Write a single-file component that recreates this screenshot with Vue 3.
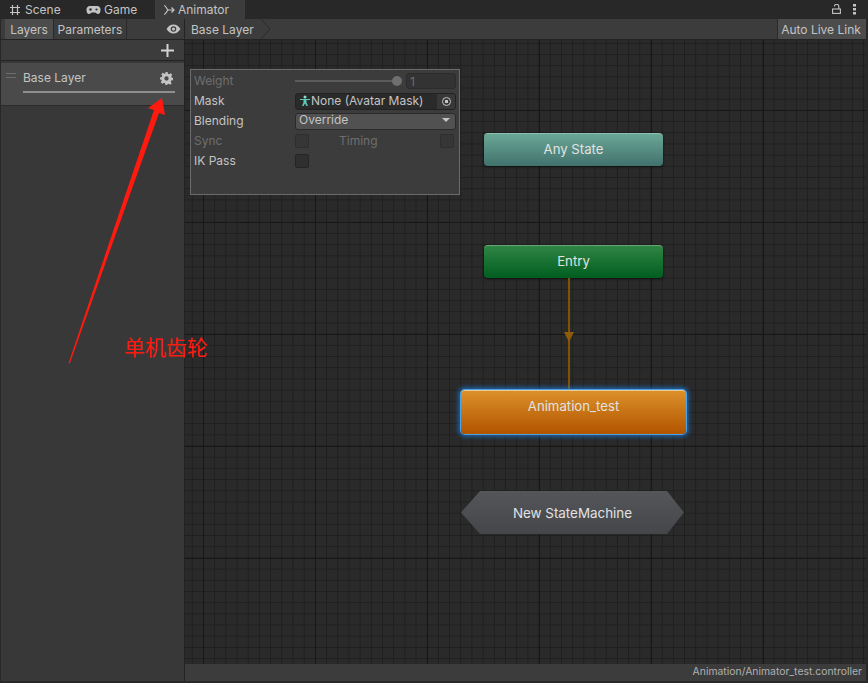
<script setup>
const tabs = [
  { name: "Scene", icon: "grid" },
  { name: "Game", icon: "pad" },
  { name: "Animator", icon: "anim", active: true },
];
</script>

<template>
  <div class="window">
    <header class="tabbar">
      <div v-for="tab in tabs" :key="tab.name" class="tab" :class="[tab.icon, { active: tab.active }]">
        <svg v-if="tab.icon === 'grid'" width="12" height="12" viewBox="0 0 12 12" fill="none" stroke="#c4c4c4" stroke-width="1.2">
          <path d="M3.5 1v10M8.5 1v10M1 3.5h10M1 8.5h10" />
        </svg>
        <svg v-else-if="tab.icon === 'pad'" width="15" height="10" viewBox="0 0 15 10">
          <path d="M4 1h7a3.5 3.5 0 0 1 3.5 4c0 2.500-1 4-2.500 4-1.500 0-2-1.500-3-1.500H6C5 7.500 4.500 9 3 9 1.500 9 .5 7.500.5 5A3.500 3.500 0 0 1 4 1z" fill="#c4c4c4" />
          <circle cx="4.500" cy="4.500" r="1.300" fill="#333" />
          <circle cx="10.500" cy="4.500" r="1.100" fill="#333" />
        </svg>
        <svg v-else width="12" height="12" viewBox="0 0 12 12" fill="none" stroke="#c4c4c4" stroke-width="1.200">
          <path d="M1 1.500c2.500 0 2.500 4.500 4.500 4.500H11M1 10.500c2.500 0 2.500-4.500 4.500-4.500M8.500 3.500 11 6 8.500 8.500" />
        </svg>
        <span>{{ tab.name }}</span>
      </div>
      <div class="window-tools">
        <svg width="9" height="10" viewBox="0 0 9 10" fill="none" stroke="#c4c4c4" stroke-width="1.100">
          <path d="M2.400 2.500a2.200 2.200 0 0 1 4.400 0V5" />
          <rect x=".6" y="5" width="7.800" height="4.400" />
        </svg>
        <svg width="3" height="11" viewBox="0 0 3 11" fill="#c4c4c4">
          <rect x="0" y="0" width="3" height="2.500" />
          <rect x="0" y="4" width="3" height="2.500" />
          <rect x="0" y="8" width="3" height="2.500" />
        </svg>
      </div>
    </header>

    <div class="workspace">
      <aside class="sidebar">
        <div class="side-toolbar">
          <button class="side-tab selected">Layers</button>
          <button class="side-tab">Parameters</button>
          <svg class="eye" width="15" height="10" viewBox="0 0 15 10">
            <path d="M.5 5C2.500 1.800 5 .5 7.500.5S12.500 1.800 14.500 5C12.500 8.200 10 9.500 7.500 9.500S2.500 8.200.5 5z" fill="#c4c4c4" />
            <circle cx="7.500" cy="5" r="2.800" fill="#3c3c3c" />
            <circle cx="7.500" cy="5" r="1.600" fill="#c4c4c4" />
          </svg>
        </div>
        <div class="add-row">
          <svg width="13" height="13" viewBox="0 0 13 13" fill="#d2d2d2">
            <rect x="5.500" y="0" width="2" height="13" />
            <rect x="0" y="5.500" width="13" height="2" />
          </svg>
        </div>
        <div class="layer-row">
          <span class="handle"></span>
          <div class="layer-body">
            <div class="layer-head">
              <span>Base Layer</span>
              <svg width="13" height="13" viewBox="0 0 24 24" fill="#c4c4c4">
                <path fill-rule="evenodd" d="M10 0h4l.7 3.400 2.200.9L19.800 2.400l2.800 2.800-1.900 2.900.9 2.200L24 11v4l-3.400.7-.9 2.200 1.900 2.900-2.800 2.800-2.900-1.900-2.200.9L13 24h-3l-.7-3.400-2.200-.9-2.900 1.900-2.800-2.800 1.900-2.900-.9-2.200L0 14v-4l3.400-.7.9-2.200L2.400 4.200l2.800-2.800 2.900 1.900 2.200-.9zM12 8a4 4 0 1 0 0 8 4 4 0 0 0 0-8z" />
              </svg>
            </div>
            <div class="layer-bar"></div>
          </div>
        </div>
        <div class="side-fill"></div>
      </aside>

      <main class="editor">
        <div class="breadcrumb-bar">
          <div class="crumb">
            <span>Base Layer</span>
            <svg width="10" height="20" viewBox="0 0 10 20" fill="none" stroke="#2a2a2a">
              <path d="M0 0l9 10L0 20" />
            </svg>
          </div>
          <button class="live-link">Auto Live Link</button>
        </div>

        <div class="graph">
          <section class="inspector">
            <div class="prop disabled">
              <label>Weight</label>
              <div class="weight">
                <div class="slider"><i></i></div>
                <div class="number">1</div>
              </div>
            </div>
            <div class="prop">
              <label>Mask</label>
              <div class="object-field">
                <svg width="12" height="12" viewBox="0 0 12 12">
                  <circle cx="6" cy="2" r="1.500" fill="#7fe0d0" />
                  <path d="M1 4h10v1H7.500v2.500L9 11H7.500L6 8.500 4.500 11H3l1.500-3.500V5H1z" fill="#5cc8b8" />
                </svg>
                <span>None (Avatar Mask)</span>
                <div class="picker"><b></b></div>
              </div>
            </div>
            <div class="prop">
              <label>Blending</label>
              <div class="dropdown">
                <span>Override</span>
                <i></i>
              </div>
            </div>
            <div class="prop disabled">
              <label>Sync</label>
              <div class="sync">
                <span class="check"></span>
                <span class="timing">Timing</span>
                <span class="check"></span>
              </div>
            </div>
            <div class="prop">
              <label>IK Pass</label>
              <div class="sync"><span class="check"></span></div>
            </div>
          </section>

          <div class="node any">Any State</div>
          <div class="node entry">Entry</div>
          <div class="transition"><i></i></div>
          <div class="node clip">Animation_test</div>
          <div class="node machine">New StateMachine</div>
        </div>

        <footer class="status">Animation/Animator_test.controller</footer>
      </main>
    </div>

    <svg class="annotation" width="180" height="275" viewBox="0 0 180 275">
      <path d="M.6 270 86 17 80 15 94 5 97 22 91 20 1.800 270.400z" fill="#ff1a10" />
    </svg>
    <div class="note">单机齿轮</div>
  </div>
</template>

<style scoped>
.window {
  position: relative;
  width: 868px;
  height: 683px;
  display: flex;
  flex-direction: column;
  overflow: hidden;
  padding: 0 2px 2px 1px;
  box-sizing: border-box;
  background: #282828;
  color: #c4c4c4;
  font: 12px/1 Inter, "Liberation Sans", sans-serif;
}
.tabbar {
  height: 19px;
  flex: none;
  display: flex;
  align-items: stretch;
  margin-right: -2px;
  background: #282828;
  font-size: 12px;
}
.tab {
  display: flex;
  align-items: center;
  gap: 4px;
  padding-top: 1px;
  box-sizing: border-box;
}
.tab.grid {
  width: 85px;
  padding-left: 8px;
}
.tab.pad {
  width: 69px;
  gap: 3px;
}
.tab.active {
  width: 90px;
  padding-left: 8px;
  background: #3c3c3c;
  gap: 3px;
}
.window-tools {
  margin-left: auto;
  display: flex;
  align-items: center;
  gap: 12px;
  padding: 0 12px 1px 0;
}
.workspace {
  flex: 1;
  min-height: 0;
  display: flex;
}
.sidebar {
  width: 183px;
  flex: none;
  display: flex;
  flex-direction: column;
  background: #383838;
  border-right: 1px solid #232323;
}
.side-toolbar {
  height: 20px;
  flex: none;
  display: flex;
  align-items: stretch;
  padding-left: 4px;
  background: #3c3c3c;
  border-bottom: 1px solid #232323;
  position: relative;
}
.side-tab {
  padding: 2px 0 0;
  margin: 0;
  border: 0;
  border-right: 1px solid #2a2a2a;
  background: #3c3c3c;
  color: #c4c4c4;
  font: inherit;
  width: 73px;
}
.side-tab.selected {
  width: 49px;
  background: #4c4c4c;
}
.eye {
  margin: 5px 3px 0 auto;
}
.add-row {
  height: 20px;
  flex: none;
  display: flex;
  align-items: center;
  justify-content: flex-end;
  padding-right: 10px;
  background: #3c3c3c;
  border-bottom: 1px solid #232323;
}
.layer-row {
  height: 42px;
  flex: none;
  margin-top: 2px;
  display: flex;
  background: #4a4a4a;
  border-bottom: 1px solid #2b2b2b;
}
.handle {
  width: 10px;
  height: 3px;
  margin: 10px 0 0 5px;
  border-top: 1px solid #6c6c6c;
  border-bottom: 1px solid #6c6c6c;
}
.layer-body {
  width: 152px;
  margin-left: 7px;
  padding-top: 8px;
}
.layer-head {
  display: flex;
  justify-content: space-between;
  align-items: center;
  height: 14px;
  padding-right: 2px;
}
.layer-bar {
  height: 2px;
  margin-top: 6px;
  background: #8f8f8f;
}
.side-fill {
  flex: 1;
}
.editor {
  flex: 1;
  min-width: 0;
  display: flex;
  flex-direction: column;
}
.breadcrumb-bar {
  height: 20px;
  flex: none;
  display: flex;
  justify-content: space-between;
  background: #3c3c3c;
  border-bottom: 1px solid #232323;
}
.crumb {
  display: flex;
  align-items: center;
  gap: 7px;
  padding-left: 6px;
}
.crumb span {
  padding-top: 2px;
}
.live-link {
  width: 89px;
  padding: 2px 2px 0 0;
  margin: 0;
  border: 0;
  border-left: 1px solid #2a2a2a;
  background: #4c4c4c;
  color: #c4c4c4;
  font: inherit;
}
.graph {
  position: relative;
  flex: 1;
  min-height: 0;
  background-color: #2a2a2a;
  background-image:
    linear-gradient(90deg, #171717 1px, transparent 1px),
    linear-gradient(#171717 1px, transparent 1px),
    linear-gradient(90deg, #1f1f1f 1px, transparent 1px),
    linear-gradient(#1f1f1f 1px, transparent 1px);
  background-size: 112px 112px, 112px 112px, 11.2px 11.2px, 11.2px 11.2px;
  background-position: 18px 0, 0 70px, 6.800px 0, 0 2.800px;
}
.inspector {
  position: absolute;
  left: 5px;
  top: 29px;
  width: 270px;
  height: 126px;
  box-sizing: border-box;
  padding: 2px 3px;
  background: #3c3c3c;
  border: 1px solid #6b6b6b;
  display: flex;
  flex-direction: column;
  gap: 2px;
}
.prop {
  height: 18px;
  display: flex;
  align-items: center;
}
.prop label {
  width: 101px;
  flex: none;
}
.prop.disabled {
  color: #6e6e6e;
}
.weight {
  flex: 1;
  display: flex;
  align-items: center;
}
.slider {
  flex: 1;
  height: 2px;
  background: #5c5c5c;
  position: relative;
  margin-right: 5px;
}
.slider i {
  position: absolute;
  right: -1px;
  top: -4px;
  width: 10px;
  height: 10px;
  border-radius: 50%;
  background: #6f6f6f;
}
.number {
  width: 50px;
  height: 16px;
  box-sizing: border-box;
  padding: 2px 3px;
  background: #333;
  border: 1px solid #2c2c2c;
  border-radius: 3px;
  color: #6e6e6e;
}
.object-field {
  flex: 1;
  height: 17px;
  display: flex;
  align-items: center;
  box-sizing: border-box;
  padding-left: 3px;
  background: #2a2a2a;
  border: 1px solid #222;
  border-radius: 3px;
}
.picker {
  margin-left: auto;
  width: 18px;
  height: 15px;
  display: flex;
  align-items: center;
  justify-content: center;
  background: #383838;
  border-radius: 0 2px 2px 0;
}
.picker b {
  width: 9px;
  height: 9px;
  box-sizing: border-box;
  border: 1px solid #c4c4c4;
  border-radius: 50%;
  background: radial-gradient(circle, #c4c4c4 1.500px, transparent 2px);
}
.dropdown {
  flex: 1;
  height: 17px;
  display: flex;
  align-items: center;
  justify-content: space-between;
  box-sizing: border-box;
  padding: 0 5px 2px 3px;
  background: #515151;
  border: 1px solid #2a2a2a;
  border-radius: 3px;
}
.dropdown i {
  border-left: 4px solid transparent;
  border-right: 4px solid transparent;
  border-top: 4px solid #c4c4c4;
}
.sync {
  flex: 1;
  display: flex;
  align-items: center;
  padding-right: 2px;
}
.check {
  width: 14px;
  height: 14px;
  box-sizing: border-box;
  background: #2f2f2f;
  border: 1px solid #252525;
  border-radius: 2px;
}
.disabled .check {
  background: #363636;
  border-color: #2e2e2e;
}
.timing {
  margin: 0 auto 0 30px;
}
.node {
  position: absolute;
  display: flex;
  align-items: center;
  justify-content: center;
  box-sizing: border-box;
  border-radius: 4px;
  color: #e2e2e2;
  font-size: 13.200px;
  box-shadow: 0 1px 3px rgba(0, 0, 0, 0.6);
}
.any {
  left: 299px;
  top: 93px;
  width: 179px;
  height: 33px;
  background: linear-gradient(#6aa796, #41716d);
  border-top: 1px solid #8cc0b0;
}
.entry {
  left: 299px;
  top: 205px;
  width: 179px;
  height: 33px;
  background: linear-gradient(#2f8544, #005e20);
  border-top: 1px solid #6aa57a;
}
.clip {
  left: 276px;
  top: 350px;
  width: 225px;
  height: 44px;
  padding-bottom: 12px;
  background: linear-gradient(#db9029, #b25400);
  border-top: 1px solid #eccb95;
  box-shadow: 0 0 0 1px #4aa3e8, 0 0 4px 3px rgba(30, 130, 230, 0.6);
}
.machine {
  left: 276px;
  top: 451px;
  width: 223px;
  height: 43px;
  padding-top: 2px;
  border-radius: 0;
  font-size: 13.400px;
  background: linear-gradient(#54565a, #44464a);
  box-shadow: none;
  clip-path: polygon(19px 0, 206px 0, 223px 50%, 206px 100%, 19px 100%, 0 50%);
}
.transition {
  position: absolute;
  left: 383px;
  top: 238px;
  width: 2px;
  height: 112px;
  background: #7f5206;
}
.transition i {
  position: absolute;
  left: -4px;
  top: 54px;
  border-left: 5px solid transparent;
  border-right: 5px solid transparent;
  border-top: 10px solid #8e5c08;
}
.status {
  height: 17px;
  flex: none;
  display: flex;
  align-items: center;
  justify-content: flex-end;
  padding-right: 4px;
  background: #3c3c3c;
  font-size: 10.400px;
  color: #b0b0b0;
}
.annotation {
  position: absolute;
  left: 68px;
  top: 93px;
}
.note {
  position: absolute;
  left: 124px;
  top: 335px;
  color: #ff1a10;
  font: 21px/1.1 "Noto Sans CJK SC", sans-serif;
}
</style>

<style>
html,
body {
  margin: 0;
  background: #282828;
}
</style>
